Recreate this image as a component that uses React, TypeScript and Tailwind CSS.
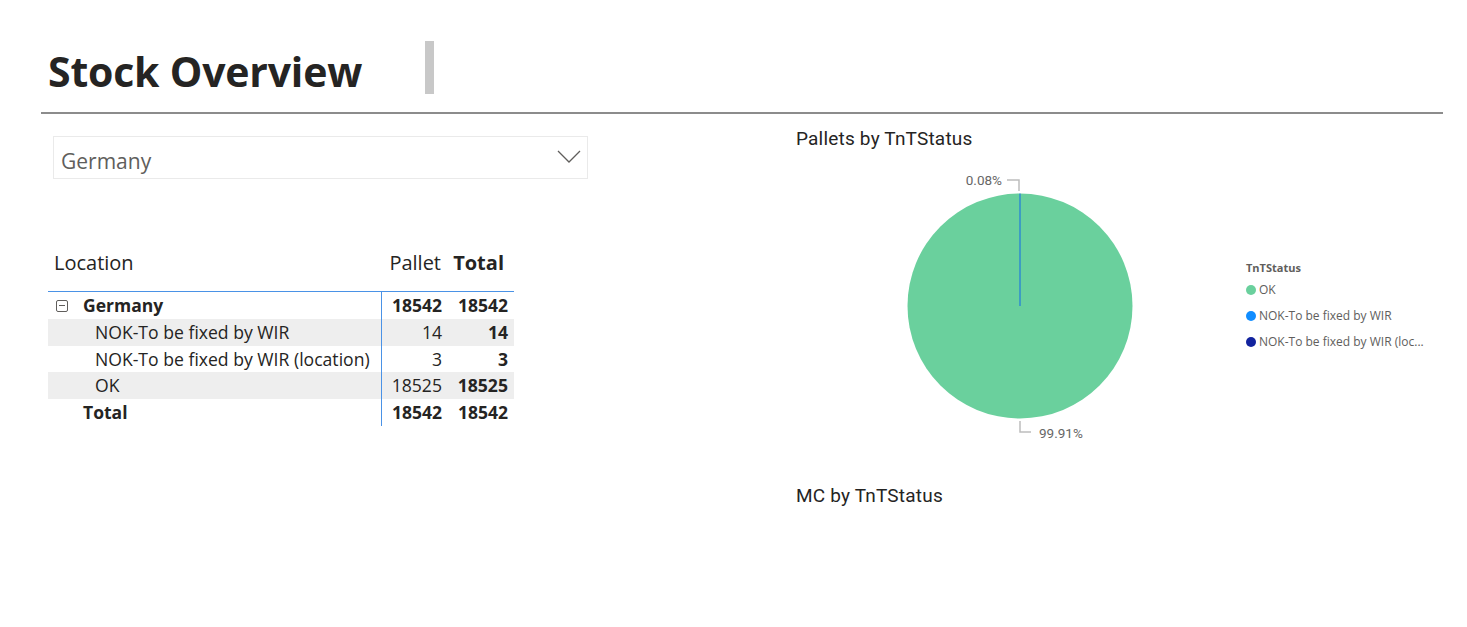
import React from 'react'

const ROWS = [
  { label: 'NOK-To be fixed by WIR', pallet: '14', total: '14', shaded: true },
  { label: 'NOK-To be fixed by WIR (location)', pallet: '3', total: '3', shaded: false },
  { label: 'OK', pallet: '18525', total: '18525', shaded: true },
]

const LEGEND = [
  { label: 'OK', color: '#6ad09d' },
  { label: 'NOK-To be fixed by WIR', color: '#118dff' },
  { label: 'NOK-To be fixed by WIR (loc...', color: '#12239e' },
]

function PieChart() {
  const cx = 224
  const cy = 156
  const r = 112.5
  return (
    <svg width="440" height="310" className="block">
      <circle cx={cx} cy={cy} r={r} fill="#6ad09d" />
      <line x1={cx} y1={cy - r} x2={cx} y2={cy} stroke="#1168e8" strokeWidth="1" />
      {/* leader 0.08% */}
      <polyline points={`${cx - 13},30 ${cx - 1},30 ${cx - 1},41`} fill="none" stroke="#bdbdbd" strokeWidth="1.5" />
      <text x={cx - 18} y="35" textAnchor="end" fontSize="13.5" fill="#666" fontFamily="Roboto, sans-serif">0.08%</text>
      {/* leader 99.91% */}
      <polyline points={`${cx},271 ${cx},282 ${cx + 11},282`} fill="none" stroke="#bdbdbd" strokeWidth="1.5" />
      <text x={cx + 19} y="288" fontSize="13.5" fill="#666" fontFamily="Roboto, sans-serif">99.91%</text>
    </svg>
  )
}

export default function App() {
  return (
    <div className="w-[1467px] h-[627px] bg-white overflow-hidden" style={{ fontFamily: '"Open Sans", sans-serif' }}>
      {/* Header */}
      <div className="ml-[41px] w-[1402px] border-b-2 border-[#8c8c8c] h-[114px] flex items-start">
        <h1 className="pl-[7px] pt-[43px] text-[41px] leading-[56px] font-bold text-[#252423] tracking-[-0.2px]">
          Stock Overview
        </h1>
        <div className="ml-[63px] mt-[41px] w-[9px] h-[53px] bg-[#c8c8c8]" />
      </div>

      <div className="flex">
        {/* Left */}
        <div className="w-[755px] pl-[48px]">
          <div className="ml-[5px] mt-[22px] w-[535px] h-[43px] border border-[#eaeaea] flex items-center justify-between pl-[7px] pr-[6px]">
            <span className="text-[21px] text-[#605e5c] mt-[8px]">Germany</span>
            <svg width="24" height="14" viewBox="0 0 24 14" className="mt-[-2px]">
              <polyline points="1,1 12,12 23,1" fill="none" stroke="#605e5c" strokeWidth="1.3" />
            </svg>
          </div>

          <div className="mt-[57px] w-[466px] text-[#252423]">
            <div className="flex items-center h-[55px] pb-[2px]">
              <div className="w-[333px] pl-[6px] text-[20px]">Location</div>
              <div className="w-[66px] text-right pr-[6px] text-[20px]">Pallet</div>
              <div className="w-[67px] text-right pr-[10px] text-[20px] font-bold">Total</div>
            </div>
            <div className="h-px bg-[#4a92e6]" />
            <div className="flex">
              <div className="w-[333px]">
                <div className="flex items-center h-[27px] text-[17.5px] font-bold pl-[8px]">
                  <span className="w-[12px] h-[12px] border border-[#605e5c] rounded-[2px] flex items-center justify-center mr-[15px]">
                    <span className="w-[6px] h-[1px] bg-[#605e5c]" />
                  </span>
                  Germany
                </div>
                {ROWS.map((row) => (
                  <div key={row.label} className={`flex items-center h-[26.5px] text-[17.6px] pl-[47px] whitespace-nowrap ${row.shaded ? 'bg-[#eeeeee]' : ''}`}>
                    {row.label}
                  </div>
                ))}
                <div className="flex items-center h-[27px] text-[17.5px] font-bold pl-[35px]">Total</div>
              </div>
              <div className="w-px bg-[#4a92e6]" />
              <div className="w-[132px]">
                <div className="flex items-center h-[27px] text-[17.5px] font-bold">
                  <div className="w-[65px] text-right pr-[5px]">18542</div>
                  <div className="w-[67px] text-right pr-[6px]">18542</div>
                </div>
                {ROWS.map((row) => (
                  <div key={row.label} className={`flex items-center h-[26.5px] text-[17.6px] ${row.shaded ? 'bg-[#eeeeee]' : ''}`}>
                    <div className="w-[65px] text-right pr-[5px]">{row.pallet}</div>
                    <div className="w-[67px] text-right pr-[6px] font-bold">{row.total}</div>
                  </div>
                ))}
                <div className="flex items-center h-[27px] text-[17.5px] font-bold">
                  <div className="w-[65px] text-right pr-[5px]">18542</div>
                  <div className="w-[67px] text-right pr-[6px]">18542</div>
                </div>
              </div>
            </div>
          </div>
        </div>

        {/* Right */}
        <div className="pl-[41px]" style={{ fontFamily: 'Roboto, sans-serif' }}>
          <div className="mt-[14px] text-[19px] text-[#252423] h-[22px] leading-[22px] tracking-[0.2px]">Pallets by TnTStatus</div>
          <div className="flex">
            <PieChart />
            <div className="pt-[110px] pl-[10px]" style={{ fontFamily: '"Open Sans", sans-serif' }}>
              <div className="text-[11px] font-bold text-[#605e5c]">TnTStatus</div>
              {LEGEND.map((item) => (
                <div key={item.label} className="flex items-center h-[26px] text-[12px] text-[#605e5c]">
                  <span className="w-[10px] h-[10px] rounded-full mr-[3px]" style={{ backgroundColor: item.color }} />
                  {item.label}
                </div>
              ))}
            </div>
          </div>
          <div className="mt-[22px] text-[19px] text-[#252423] tracking-[0.2px]">MC by TnTStatus</div>
        </div>
      </div>
    </div>
  )
}
